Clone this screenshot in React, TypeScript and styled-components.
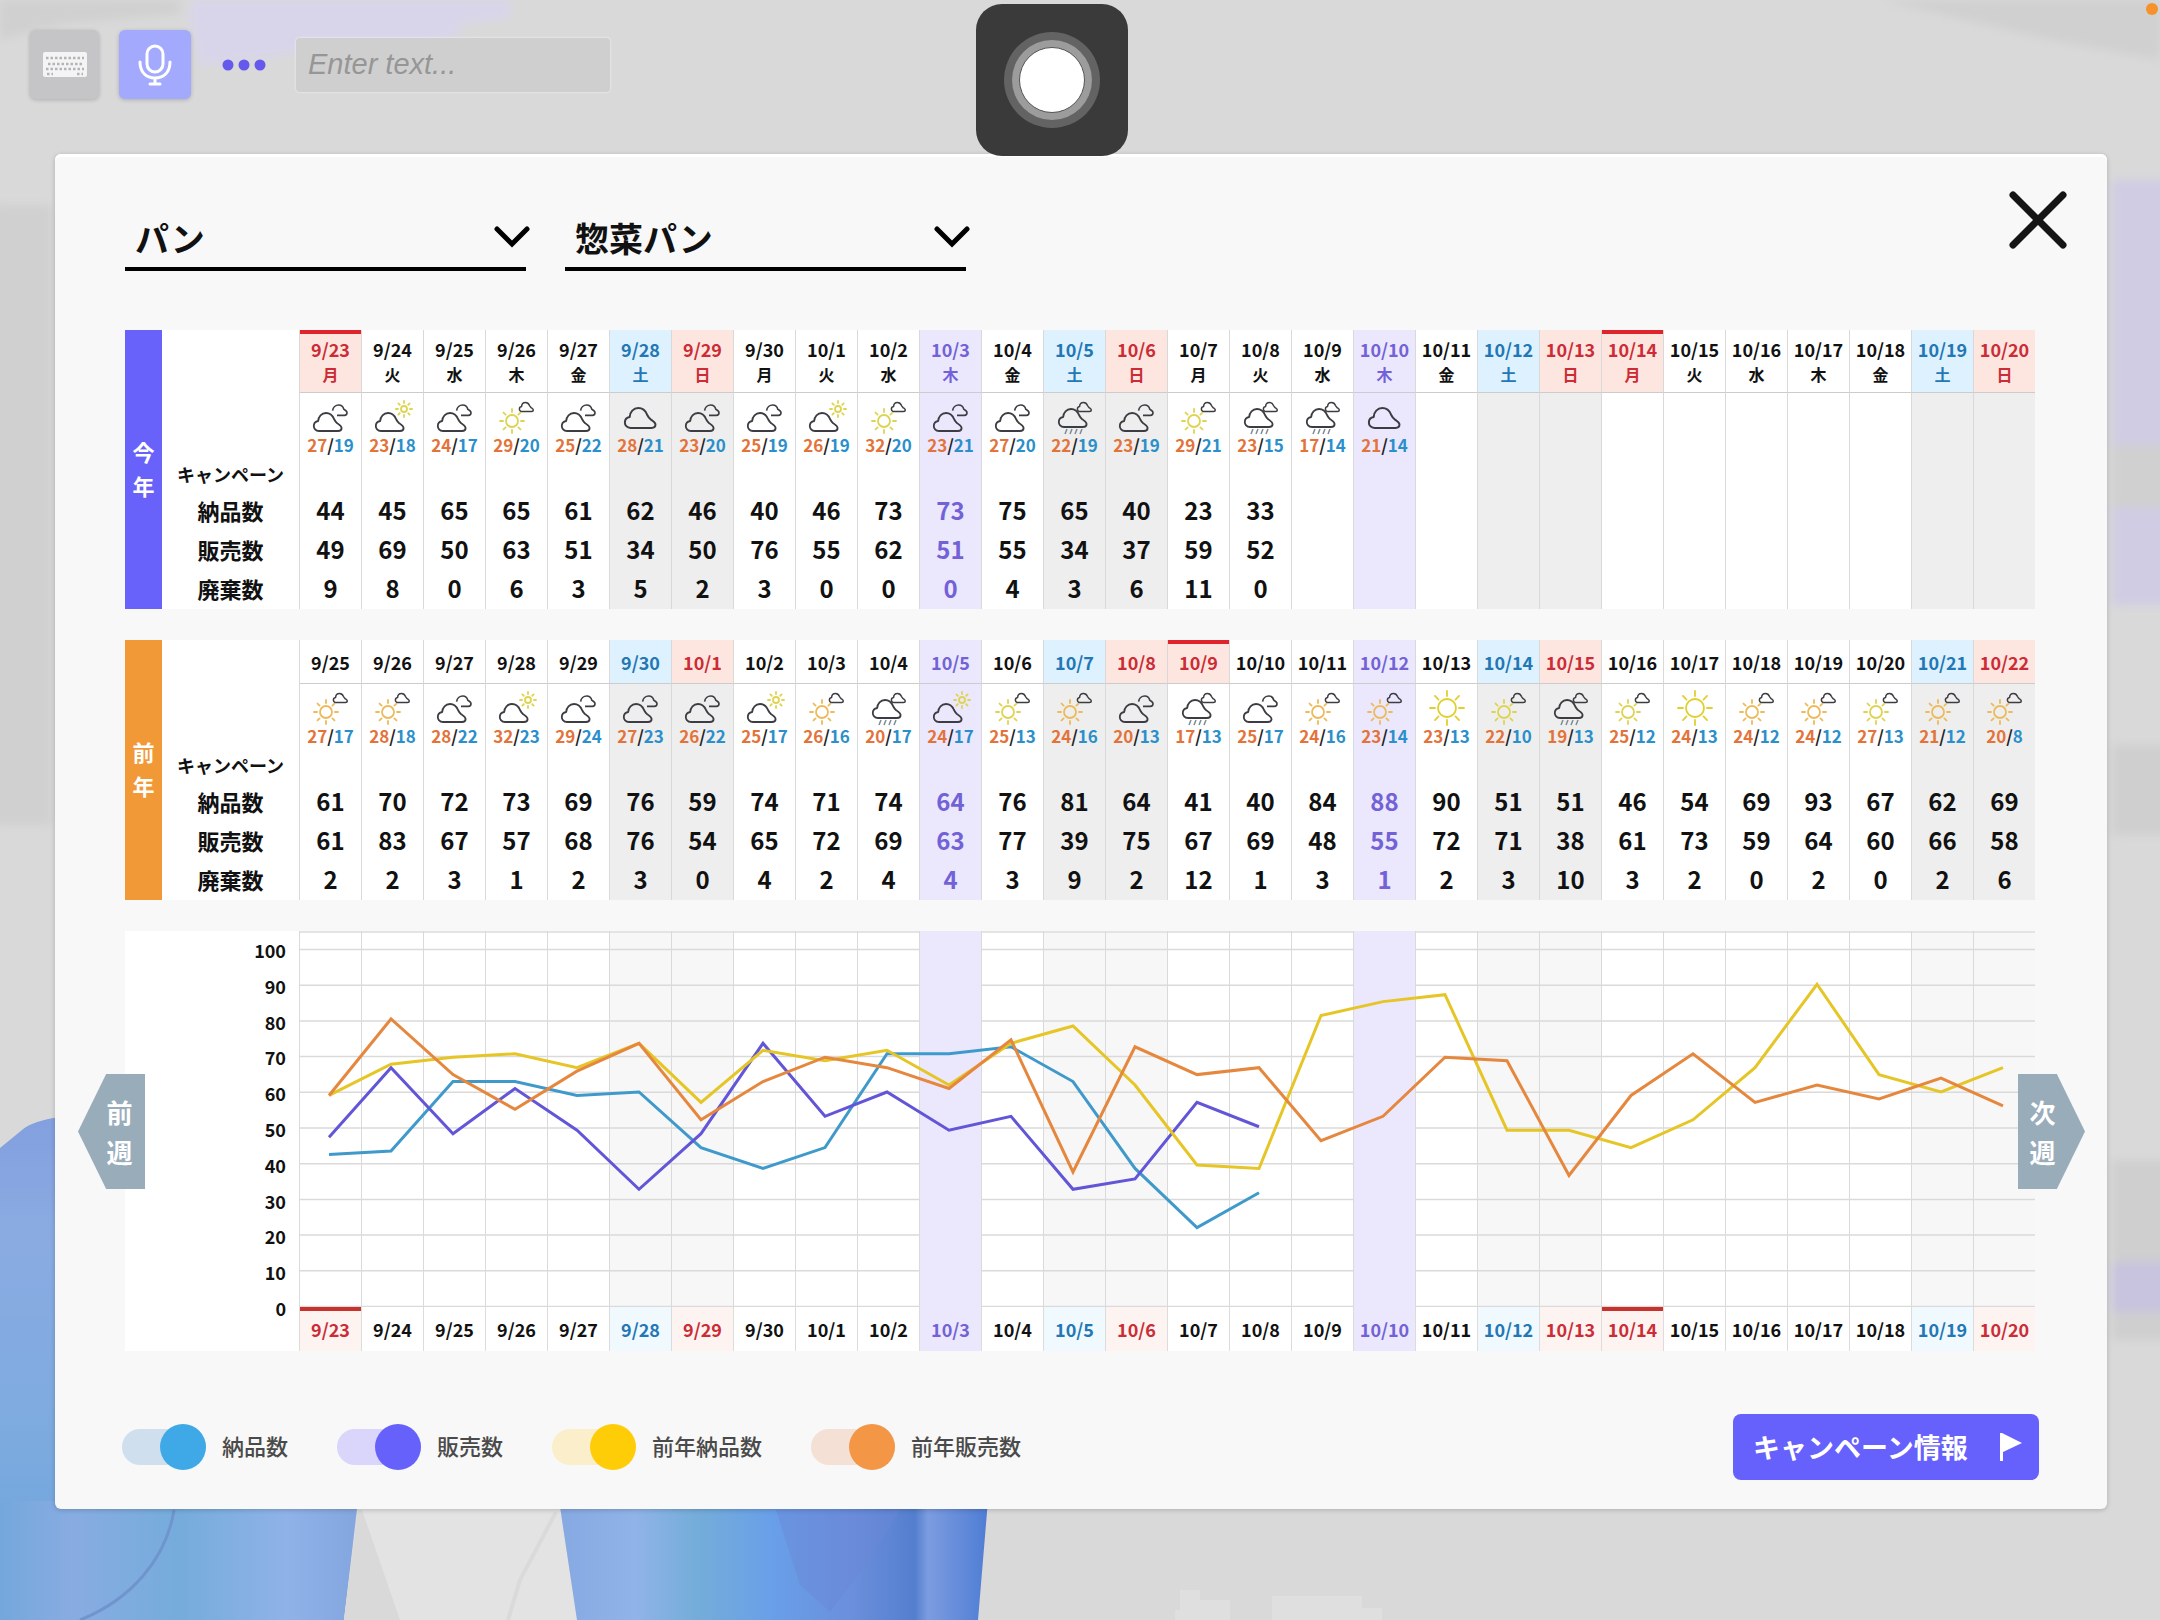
import React, { useState } from "react";
import styled, { createGlobalStyle, css } from "styled-components";

const GlobalStyle = createGlobalStyle`
  *, *::before, *::after { box-sizing: border-box; }
  html, body { margin: 0; padding: 0; }
  body {
    background: #d9d9d9;
    color: #111;
    font-family: "Noto Sans CJK JP", "Noto Sans", sans-serif;
  }
  button, input, select { font-family: inherit; margin: 0; }
`;

/* ---------- data ---------- */

type Tone = "plain" | "sat" | "sun" | "holiday" | "today";
type Sky = "cc" | "cs" | "sc" | "so" | "c" | "rc" | "s";

const DAYS = ["月", "火", "水", "木", "金", "土", "日"];

const thisYear = {
  dates: "9/23 9/24 9/25 9/26 9/27 9/28 9/29 9/30 10/1 10/2 10/3 10/4 10/5 10/6 10/7 10/8 10/9 10/10 10/11 10/12 10/13 10/14 10/15 10/16 10/17 10/18 10/19 10/20".split(" "),
  sky: "cc cs cc sc cc c cc cc cs sc cc cc rc cc sc rc rc c".split(" ") as Sky[],
  temps: "27/19 23/18 24/17 29/20 25/22 28/21 23/20 25/19 26/19 32/20 23/21 27/20 22/19 23/19 29/21 23/15 17/14 21/14".split(" "),
  delivered: [44, 45, 65, 65, 61, 62, 46, 40, 46, 73, 73, 75, 65, 40, 23, 33],
  sold: [49, 69, 50, 63, 51, 34, 50, 76, 55, 62, 51, 55, 34, 37, 59, 52],
  wasted: [9, 8, 0, 6, 3, 5, 2, 3, 0, 0, 0, 4, 3, 6, 11, 0],
  holidays: [0, 21],
};

const lastYear = {
  dates: "9/25 9/26 9/27 9/28 9/29 9/30 10/1 10/2 10/3 10/4 10/5 10/6 10/7 10/8 10/9 10/10 10/11 10/12 10/13 10/14 10/15 10/16 10/17 10/18 10/19 10/20 10/21 10/22".split(" "),
  sky: "so so cc cs cc cc cc cs so rc cs sc so cc rc cc so so s sc rc sc s so so sc so so".split(" ") as Sky[],
  temps: "27/17 28/18 28/22 32/23 29/24 27/23 26/22 25/17 26/16 20/17 24/17 25/13 24/16 20/13 17/13 25/17 24/16 23/14 23/13 22/10 19/13 25/12 24/13 24/12 24/12 27/13 21/12 20/8".split(" "),
  delivered: [61, 70, 72, 73, 69, 76, 59, 74, 71, 74, 64, 76, 81, 64, 41, 40, 84, 88, 90, 51, 51, 46, 54, 69, 93, 67, 62, 69],
  sold: [61, 83, 67, 57, 68, 76, 54, 65, 72, 69, 63, 77, 39, 75, 67, 69, 48, 55, 72, 71, 38, 61, 73, 59, 64, 60, 66, 58],
  wasted: [2, 2, 3, 1, 2, 3, 0, 4, 2, 4, 4, 3, 9, 2, 12, 1, 3, 1, 2, 3, 10, 3, 2, 0, 2, 0, 2, 6],
  holidays: [14],
};

type YearData = typeof thisYear;

const toneOf = (index: number, holidays: number[]): Tone => {
  if (index === 10 || index === 17) return "today";
  if (holidays.includes(index)) return "holiday";
  if (index % 7 === 5) return "sat";
  if (index % 7 === 6) return "sun";
  return "plain";
};

const INK: Record<Tone, string> = {
  plain: "#111",
  sat: "#2277b4",
  sun: "#cb2c35",
  holiday: "#cb2c35",
  today: "#7262d6",
};
const HEAD: Record<Tone, string> = {
  plain: "#fff",
  sat: "#ddf1fe",
  sun: "#fee6e0",
  holiday: "#fee6e0",
  today: "#ebe8fe",
};
const BODY: Record<Tone, string> = {
  plain: "#fff",
  sat: "#eee",
  sun: "#eee",
  holiday: "#fff",
  today: "#ebe8fe",
};
const PLOT: Record<Tone, string> = {
  plain: "#fff",
  sat: "#f7f7f7",
  sun: "#f7f7f7",
  holiday: "#fff",
  today: "#ebe8fe",
};
const AXIS: Record<Tone, string> = {
  plain: "#fff",
  sat: "#f0f9fe",
  sun: "#fdf3f0",
  holiday: "#fdf3f0",
  today: "#ebe8fe",
};

/* ---------- page ---------- */

const Page = styled.div`
  position: relative;
  min-height: 100vh;
  overflow: hidden;
`;

const Scene = styled.svg`
  position: absolute;
  inset: 0;
  width: 100%;
  height: 100%;
`;

const Toolbar = styled.header`
  position: relative;
  display: flex;
  align-items: center;
  gap: 20px;
  height: 154px;
  padding: 30px 30px 55px;
`;

const ToolButton = styled.button<{ $bg: string; $width: number }>`
  display: flex;
  align-items: center;
  justify-content: center;
  width: ${(p) => p.$width}px;
  height: 69px;
  padding: 0;
  border: 0;
  border-radius: 6px;
  background: ${(p) => p.$bg};
  box-shadow: ${(p) => (p.$bg === "transparent" ? "none" : "0 1px 4px rgba(0, 0, 0, 0.2)")};
`;

const TextEntry = styled.input`
  width: 314px;
  height: 54px;
  padding: 0 12px;
  border: 0;
  border-radius: 4px;
  background: #cfcfcf;
  box-shadow: 0 0 2px 1px rgba(255, 255, 255, 0.35);
  font: italic 29px "Liberation Sans", Arial, sans-serif;
  &::placeholder { color: #969696; opacity: 1; }
`;

const TouchPad = styled.button`
  position: absolute;
  left: 976px;
  top: 4px;
  z-index: 3;
  display: flex;
  align-items: center;
  justify-content: center;
  width: 152px;
  height: 152px;
  padding: 0;
  border: 0;
  border-radius: 26px;
  background: #3a3a3a;
`;

const TouchRing = styled.span`
  width: 66px;
  height: 66px;
  border-radius: 50%;
  background: #fff;
  border: 1px solid #555;
  box-shadow: 0 0 0 7px #9c9c9c, 0 0 0 15px #636363;
`;

const StatusDot = styled.span`
  position: absolute;
  top: 3px;
  right: 2px;
  width: 12px;
  height: 12px;
  border-radius: 50%;
  background: #f7912c;
`;

const Modal = styled.main`
  position: relative;
  margin: 0 53px 0 55px;
  border-radius: 6px;
  background: #f8f8f8;
  box-shadow: 0 1px 5px rgba(0, 0, 0, 0.2), inset 0 4px 0 -1px #fff;
`;

const ModalHeader = styled.div`
  display: flex;
  align-items: flex-start;
  justify-content: space-between;
  padding: 37px 40px 0 70px;
`;

const Filters = styled.div`
  display: flex;
  gap: 39px;
  padding-top: 16px;
`;

const SelectBox = styled.label`
  position: relative;
  width: 401px;
  border-bottom: 4px solid #000;
  svg {
    position: absolute;
    right: -4px;
    top: 18px;
    pointer-events: none;
  }
`;

const Select = styled.select`
  display: block;
  width: 100%;
  height: 60px;
  padding: 0 10px;
  border: 0;
  background: transparent;
  color: #111;
  font-size: 34px;
  font-weight: 700;
  appearance: none;
`;

const CloseButton = styled.button`
  display: block;
  width: 58px;
  height: 58px;
  padding: 0;
  border: 0;
  background: none;
  svg { display: block; }
`;

const Content = styled.div`
  padding: 59px 72px 0 70px;
  display: grid;
  gap: 31px;
`;

/* ---------- tables ---------- */

const YearBlock = styled.section`
  display: flex;
`;

const YearTag = styled.h2<{ $bg: string }>`
  display: flex;
  flex: none;
  flex-direction: column;
  align-items: center;
  justify-content: center;
  gap: 2px;
  width: 37px;
  margin: 0;
  padding-bottom: 4px;
  background: ${(p) => p.$bg};
  color: #fff;
  font-size: 22px;
  line-height: 32px;
  font-weight: 700;
`;

const Table = styled.table`
  width: calc(100% - 37px);
  table-layout: fixed;
  border-collapse: separate;
  border-spacing: 0;
  background: #fff;
  text-align: center;
`;

const LabelCol = styled.col`
  width: 137px;
`;

const DateCell = styled.th<{ $tone: Tone; $tall: boolean; $marked: boolean }>`
  height: ${(p) => (p.$tall ? 63 : 44)}px;
  padding: 0;
  border-left: 1px solid #d9d9d9;
  border-bottom: 1px solid #ccc;
  background: ${(p) => HEAD[p.$tone]};
  color: ${(p) => INK[p.$tone]};
  font-size: 18px;
  line-height: 26px;
  font-weight: 700;
  white-space: nowrap;
  ${(p) => p.$marked && css`box-shadow: inset 0 4px 0 #e0242c;`}
`;

const DayName = styled.span`
  display: block;
  font-size: 16px;
  line-height: 24px;
`;

const RowLabel = styled.th<{ $small?: boolean }>`
  padding: 0 0 4px;
  font-size: ${(p) => (p.$small ? 18 : 22)}px;
  line-height: 28px;
  font-weight: 700;
  white-space: nowrap;
`;

const Cell = styled.td<{ $tone: Tone; $height: number }>`
  height: ${(p) => p.$height}px;
  padding: 0 0 ${(p) => (p.$height === 67 ? 0 : 4)}px;
  border-left: 1px solid #d9d9d9;
  background: ${(p) => BODY[p.$tone]};
  color: ${(p) => (p.$tone === "today" ? INK.today : "#111")};
  font-size: 24px;
  line-height: 30px;
  font-weight: 700;
  vertical-align: middle;
`;

const SkyBox = styled.div`
  display: flex;
  flex-direction: column;
  align-items: center;
  height: 67px;
  padding-top: 2px;
`;

const Temps = styled.span`
  color: #222;
  font-size: 17px;
  line-height: 20px;
  font-weight: 700;
  white-space: nowrap;
`;
const High = styled.span` color: #e4733a; `;
const Low = styled.span` color: #2b8fcb; `;

function Sun({ x, y, r, ray, color }: { x: number; y: number; r: number; ray: number; color: string }) {
  return (
    <g stroke={color} strokeWidth="1.8" fill="none" strokeLinecap="round">
      <circle cx={x} cy={y} r={r} />
      {Array.from({ length: 8 }, (_, i) => {
        const a = (i * Math.PI) / 4;
        const c = Math.cos(a);
        const s = Math.sin(a);
        return <line key={i} x1={x + c * (r + 3)} y1={y + s * (r + 3)} x2={x + c * ray} y2={y + s * ray} />;
      })}
    </g>
  );
}

const CLOUD = "M6 19 C2.5 19 0.8 16.5 0.8 14 C0.8 11.2 2.8 9.4 5.2 9 C5.4 4.4 8.6 1 13 1 C17.4 1 19.6 3.6 21 7 C22 9 23 10.2 24.2 11.2 C26.4 12.8 28.6 14 28.6 16 C28.6 17.8 27 19 25 19 Z";

function Cloud({ x, y, scale, width = 1.8 }: { x: number; y: number; scale: number; width?: number }) {
  return (
    <path
      d={CLOUD}
      transform={`translate(${x} ${y}) scale(${scale})`}
      stroke="#3c3c42"
      strokeWidth={width / scale}
      strokeLinejoin="round"
      fill="none"
    />
  );
}

function SkyIcon({ kind }: { kind: Sky }) {
  const yellow = "#ded452";
  const amber = "#ecbb5c";
  return (
    <svg width="40" height="40" viewBox="0 0 40 40" aria-hidden="true">
      {kind === "c" && <Cloud x={3} y={12} scale={1.1} width={2} />}
      {(kind === "cc" || kind === "cs") && <Cloud x={2} y={17} scale={1} />}
      {kind === "cc" && (
        <path d="M21.6 15.6 C22 12.4 24.6 10 27.8 10 C30.6 10 32.2 11.8 32.8 14.2 C34.4 15 36 16 36 17.8 C36 19.4 35 20.4 33.4 20.4 L26 20.4" stroke="#3c3c42" strokeWidth="1.6" fill="none" strokeLinejoin="round" />
      )}
      {kind === "cs" && <Sun x={31} y={14} r={3} ray={8} color={yellow} />}
      {kind === "sc" && <Sun x={15} y={26} r={6} ray={12} color={yellow} />}
      {kind === "so" && <Sun x={15} y={26} r={6} ray={12} color={amber} />}
      {(kind === "sc" || kind === "so" || kind === "rc") && <Cloud x={22} y={7} scale={0.5} width={1.5} />}
      {kind === "rc" && (
        <>
          <Cloud x={3} y={13} scale={1} />
          <path d="M12 34 l-2 5 M17 34 l-2 5 M22 34 l-2 5 M27 34 l-2 5" stroke="#7d8b94" strokeWidth="1.5" fill="none" />
        </>
      )}
      {kind === "s" && <Sun x={20} y={22} r={9} ray={17} color="#e2cf2c" />}
    </svg>
  );
}

function YearTable({ data, title, color, withDays }: { data: YearData; title: string; color: string; withDays: boolean }) {
  const tones = data.dates.map((_, i) => toneOf(i, data.holidays));
  const rows: [string, number[]][] = [
    ["納品数", data.delivered],
    ["販売数", data.sold],
    ["廃棄数", data.wasted],
  ];
  return (
    <YearBlock>
      <YearTag $bg={color}>
        {title.split("").map((c) => <span key={c}>{c}</span>)}
      </YearTag>
      <Table>
        <colgroup>
          <LabelCol />
          {data.dates.map((d) => <col key={d} />)}
        </colgroup>
        <thead>
          <tr>
            <td />
            {data.dates.map((d, i) => (
              <DateCell key={d} scope="col" $tone={tones[i]} $tall={withDays} $marked={data.holidays.includes(i)}>
                {d}
                {withDays && <DayName>{DAYS[i % 7]}</DayName>}
              </DateCell>
            ))}
          </tr>
        </thead>
        <tbody>
          <tr>
            <td />
            {data.dates.map((d, i) => {
              const [high, low] = (data.temps[i] ?? "").split("/");
              return (
                <Cell key={d} $tone={tones[i]} $height={67}>
                  {data.sky[i] && (
                    <SkyBox>
                      <SkyIcon kind={data.sky[i]} />
                      <Temps><High>{high}</High>/<Low>{low}</Low></Temps>
                    </SkyBox>
                  )}
                </Cell>
              );
            })}
          </tr>
          <tr>
            <RowLabel scope="row" $small>キャンペーン</RowLabel>
            {data.dates.map((d, i) => <Cell key={d} $tone={tones[i]} $height={32} />)}
          </tr>
          {rows.map(([label, values]) => (
            <tr key={label}>
              <RowLabel scope="row">{label}</RowLabel>
              {data.dates.map((d, i) => (
                <Cell key={d} $tone={tones[i]} $height={39}>{values[i]}</Cell>
              ))}
            </tr>
          ))}
        </tbody>
      </Table>
    </YearBlock>
  );
}

/* ---------- chart ---------- */

const ChartBlock = styled.section`
  position: relative;
  display: flex;
  background: #fff;
`;

const Scale = styled.div`
  display: flex;
  flex: none;
  flex-direction: column;
  justify-content: space-between;
  width: 174px;
  padding: 9px 13px 33px 0;
  text-align: right;
  font-size: 18px;
  line-height: 20px;
  font-weight: 700;
`;

const PlotArea = styled.div`
  flex: 1;
  min-width: 0;
`;

const Plot = styled.svg`
  display: block;
  width: 100%;
  height: 376px;
`;

const Axis = styled.div`
  display: grid;
  grid-template-columns: repeat(28, 1fr);
`;

const AxisDate = styled.span<{ $tone: Tone; $marked: boolean }>`
  height: 44px;
  border-left: 1px solid #dcdcdc;
  background: ${(p) => AXIS[p.$tone]};
  color: ${(p) => INK[p.$tone]};
  font-size: 18px;
  line-height: 44px;
  font-weight: 700;
  text-align: center;
  white-space: nowrap;
  ${(p) => p.$marked && css`box-shadow: inset 0 4px 0 #c8322c;`}
`;

const WeekButton = styled.button<{ $side: "prev" | "next" }>`
  position: absolute;
  top: 143px;
  ${(p) => (p.$side === "prev" ? "left: -47px;" : "right: -50px;")}
  display: flex;
  flex-direction: column;
  align-items: center;
  justify-content: center;
  width: 67px;
  height: 115px;
  padding: ${(p) => (p.$side === "prev" ? "0 0 0 16px" : "0 18px 0 0")};
  border: 0;
  background: #99acba;
  clip-path: ${(p) =>
    p.$side === "prev"
      ? "polygon(42% 0, 100% 0, 100% 100%, 42% 100%, 0 50%)"
      : "polygon(0 0, 58% 0, 100% 50%, 58% 100%, 0 100%)"};
  color: #fff;
  font-size: 26px;
  line-height: 40px;
  font-weight: 700;
`;

const SERIES = [
  { id: "delivered", label: "納品数", color: "#3f9acb", knob: "#3fa9e8", track: "#cfdfee", values: thisYear.delivered },
  { id: "sold", label: "販売数", color: "#6255d8", knob: "#6761fb", track: "#d9d5fb", values: thisYear.sold },
  { id: "last-delivered", label: "前年納品数", color: "#e6c526", knob: "#ffcc08", track: "#fbeecb", values: lastYear.delivered },
  { id: "last-sold", label: "前年販売数", color: "#e6873e", knob: "#f39645", track: "#f5e0d6", values: lastYear.sold },
];

function Chart({ shown }: { shown: Record<string, boolean> }) {
  const tones = thisYear.dates.map((_, i) => toneOf(i, thisYear.holidays));
  const levels = [100, 90, 80, 70, 60, 50, 40, 30, 20, 10, 0];
  return (
    <ChartBlock>
      <Scale>
        {levels.map((n) => <span key={n}>{n}</span>)}
      </Scale>
      <PlotArea>
        <Plot viewBox="0 0 1736 376" preserveAspectRatio="none" role="img" aria-label="納品数と販売数の推移">
          {tones.map((t, i) => <rect key={i} x={i * 62} y={0} width={62} height={376} fill={PLOT[t]} />)}
          <line x1={0} x2={1736} y1={1} y2={1} stroke="#e4e4e4" strokeWidth={2} />
          {levels.map((n) => {
            const y = 375.5 - n * 3.57;
            return <line key={n} x1={0} x2={1736} y1={y} y2={y} stroke="#dadada" strokeWidth={1.5} />;
          })}
          {tones.map((t, i) => (
            <React.Fragment key={i}>
              {t === "today" && <rect x={i * 62} y={0} width={62} height={376} fill={PLOT[t]} />}
              <line x1={i * 62 + 0.5} x2={i * 62 + 0.5} y1={0} y2={376} stroke="#dadada" />
            </React.Fragment>
          ))}
          {SERIES.filter((s) => shown[s.id]).map((s) => (
            <polyline
              key={s.id}
              points={s.values.map((v, i) => `${i * 62 + 30},${376.5 - v * 3.476}`).join(" ")}
              fill="none"
              stroke={s.color}
              strokeWidth={3}
              strokeLinejoin="miter"
            />
          ))}
        </Plot>
        <Axis>
          {thisYear.dates.map((d, i) => (
            <AxisDate key={d} $tone={tones[i]} $marked={thisYear.holidays.includes(i)}>{d}</AxisDate>
          ))}
        </Axis>
      </PlotArea>
      <WeekButton type="button" $side="prev"><span>前</span><span>週</span></WeekButton>
      <WeekButton type="button" $side="next"><span>次</span><span>週</span></WeekButton>
    </ChartBlock>
  );
}

/* ---------- footer ---------- */

const Footer = styled.footer`
  display: flex;
  align-items: center;
  justify-content: space-between;
  padding: 63px 68px 29px 67px;
`;

const Legend = styled.div`
  display: flex;
  gap: 49px;
`;

const LegendItem = styled.label`
  display: flex;
  align-items: center;
  gap: 16px;
  color: #4a4a4a;
  font-size: 22px;
  line-height: 42px;
  font-weight: 500;
  white-space: nowrap;
`;

const LegendText = styled.span`
  padding-bottom: 4px;
`;

const Toggle = styled.input<{ $knob: string; $track: string }>`
  appearance: none;
  display: flex;
  align-items: center;
  width: 84px;
  height: 36px;
  border-radius: 18px;
  background: ${(p) => p.$track};
  &::before {
    content: "";
    width: 46px;
    height: 46px;
    flex: none;
    border-radius: 50%;
    background: ${(p) => p.$knob};
  }
  &:checked { justify-content: flex-end; }
`;

const CampaignButton = styled.button`
  display: flex;
  align-items: center;
  justify-content: space-between;
  width: 306px;
  height: 66px;
  padding: 0 16px 0 20px;
  border: 0;
  border-radius: 8px;
  background: #6660fd;
  color: #fff;
  font-size: 27px;
  line-height: 40px;
  font-weight: 700;
  white-space: nowrap;
`;

function Backdrop() {
  return (
    <Scene viewBox="0 0 2160 1620" preserveAspectRatio="xMidYMax slice" aria-hidden="true">
      <defs>
        <linearGradient id="sleeve" x1="0" x2="1">
          <stop offset="0" stopColor="#74a7dc" />
          <stop offset="0.2" stopColor="#88ace2" />
          <stop offset="0.5" stopColor="#75acdb" />
          <stop offset="0.8" stopColor="#8fb2e9" />
          <stop offset="1" stopColor="#84a6df" />
        </linearGradient>
        <linearGradient id="shoulder" x1="0" x2="0" y1="0" y2="1">
          <stop offset="0" stopColor="#839fdf" />
          <stop offset="0.3" stopColor="#8aabe2" />
          <stop offset="0.75" stopColor="#7fabe0" />
          <stop offset="1" stopColor="#76a8dd" />
        </linearGradient>
        <linearGradient id="coat" x1="0" x2="1">
          <stop offset="0" stopColor="#86a9e2" />
          <stop offset="0.18" stopColor="#90b3e8" />
          <stop offset="0.32" stopColor="#74add9" />
          <stop offset="0.5" stopColor="#699fe8" />
          <stop offset="0.68" stopColor="#6b8fdc" />
          <stop offset="0.83" stopColor="#547fce" />
          <stop offset="0.86" stopColor="#7c9ce0" />
          <stop offset="1" stopColor="#4f7dd4" />
        </linearGradient>
        <filter id="haze"><feGaussianBlur stdDeviation="5" /></filter>
      </defs>
      <rect width="2160" height="1620" fill="#d9d9d9" />
      <g filter="url(#haze)">
        <path d="M190 0 H510 V18 L460 24 V36 L430 40 V50 L290 54 L200 66 L190 20 Z" fill="#d8d5ea" />
        <path d="M0 0 H180 V14 L60 24 L0 40 Z" fill="#d0d0d0" />
        <rect x="-10" y="205" width="62" height="620" fill="#d0d0d0" />
        <path d="M1880 0 H2160 V60 L2050 40 Z" fill="#d0d0d0" />
        <rect x="2112" y="180" width="60" height="350" fill="#d0cce3" />
        <rect x="2112" y="445" width="60" height="62" fill="#d0d0d0" />
        <rect x="2112" y="530" width="60" height="75" fill="#d0cce3" />
        <rect x="2112" y="745" width="60" height="90" fill="#cfcfcf" />
        <rect x="2112" y="1160" width="60" height="180" fill="#cfcfcf" />
        <rect x="2112" y="1262" width="60" height="50" fill="#c8c3de" />
      </g>
      <path d="M0 1500 H358 L344 1620 H0 Z" fill="url(#sleeve)" />
      <path d="M0 1148 L22 1130 Q32 1121 60 1117 V1501 H0 Z" fill="url(#shoulder)" />
      <path d="M174 1510 C166 1560 130 1600 80 1620" stroke="#7094cd" strokeWidth="3" fill="none" />
      <path d="M359 1500 H559 L577 1620 H344 Z" fill="#e3e3e3" />
      <path d="M362 1510 L400 1620 H344 L358 1510 Z" fill="#d9d9d9" />
      <path d="M556 1512 L520 1580 L508 1620" stroke="#dadada" strokeWidth="4" fill="none" />
      <path d="M559 1500 H988 L978 1620 H577 Z" fill="url(#coat)" />
      <path d="M776 1510 L800 1585 L830 1612 L870 1560 L900 1510 Z" fill="#6a88d8" opacity="0.45" />
      <path d="M1180 1590 h20 v10 h30 v20 h-55 v-10 h5 Z M1272 1596 h90 v12 h20 v12 h-110 Z" fill="#dfdfdf" />
    </Scene>
  );
}

export default function App() {
  const [shown, setShown] = useState<Record<string, boolean>>(
    Object.fromEntries(SERIES.map((s) => [s.id, true]))
  );
  return (
    <Page>
      <GlobalStyle />
      <Backdrop />
      <StatusDot />
      <TouchPad type="button" aria-label="AssistiveTouch"><TouchRing /></TouchPad>
      <Toolbar>
        <ToolButton type="button" $bg="#c5c5c7" $width={69} aria-label="キーボード">
          <svg width="46" height="28" viewBox="0 0 46 28">
            <rect x="1" y="1" width="44" height="25" rx="2" fill="#f4f4f4" />
            <g stroke="#b4b4b6" strokeWidth="2.5">
              <path d="M4 7 H42" strokeDasharray="2.5 2" />
              <path d="M6 13 H42" strokeDasharray="2.5 2" />
              <path d="M4 18 H42" strokeDasharray="2.5 2" />
              <path d="M5 23 H11 M35 23 H41" strokeDasharray="2.5 2" />
            </g>
          </svg>
        </ToolButton>
        <ToolButton type="button" $bg="#a3a9fd" $width={72} aria-label="マイク">
          <svg width="34" height="42" viewBox="0 0 34 42" fill="none" stroke="#fff" strokeWidth="3" strokeLinecap="round">
            <rect x="9" y="2" width="16" height="26" rx="8" />
            <path d="M2 18 C2 28 8 34 17 34 C26 34 32 28 32 18 M17 34 V39 M12 40 H22" />
          </svg>
        </ToolButton>
        <ToolButton type="button" $bg="transparent" $width={65} aria-label="その他">
          <svg width="46" height="12" viewBox="0 0 46 12" fill="#6558ec">
            <circle cx="7" cy="6" r="5.5" />
            <circle cx="23" cy="6" r="5.5" />
            <circle cx="39" cy="6" r="5.5" />
          </svg>
        </ToolButton>
        <TextEntry type="text" aria-label="テキスト入力" placeholder="Enter text..." />
      </Toolbar>
      <Modal>
        <ModalHeader>
          <Filters>
            {["パン", "惣菜パン"].map((name, i) => (
              <SelectBox key={name}>
                <Select aria-label={i === 0 ? "大分類" : "小分類"} defaultValue={name}>
                  <option>{name}</option>
                </Select>
                <svg width="36" height="24" viewBox="0 0 36 24">
                  <path d="M3 4 L18 19 L33 4" fill="none" stroke="#000" strokeWidth="5" strokeLinecap="round" />
                </svg>
              </SelectBox>
            ))}
          </Filters>
          <CloseButton type="button" aria-label="閉じる">
            <svg width="58" height="58" viewBox="0 0 58 58">
              <path d="M4 4 L54 54 M54 4 L4 54" stroke="#151515" strokeWidth="7" strokeLinecap="round" />
            </svg>
          </CloseButton>
        </ModalHeader>
        <Content>
          <YearTable data={thisYear} title="今年" color="#6862fb" withDays />
          <YearTable data={lastYear} title="前年" color="#f19837" withDays={false} />
          <Chart shown={shown} />
        </Content>
        <Footer>
          <Legend>
            {SERIES.map((s) => (
              <LegendItem key={s.id}>
                <Toggle
                  type="checkbox"
                  $knob={s.knob}
                  $track={s.track}
                  checked={shown[s.id]}
                  onChange={() => setShown({ ...shown, [s.id]: !shown[s.id] })}
                />
                <LegendText>{s.label}</LegendText>
              </LegendItem>
            ))}
          </Legend>
          <CampaignButton type="button">
            キャンペーン情報
            <svg width="24" height="30" viewBox="0 0 24 30" fill="#fff">
              <path d="M1 1 H3 L23 11 L4 20 V29 H1 Z" />
            </svg>
          </CampaignButton>
        </Footer>
      </Modal>
    </Page>
  );
}
